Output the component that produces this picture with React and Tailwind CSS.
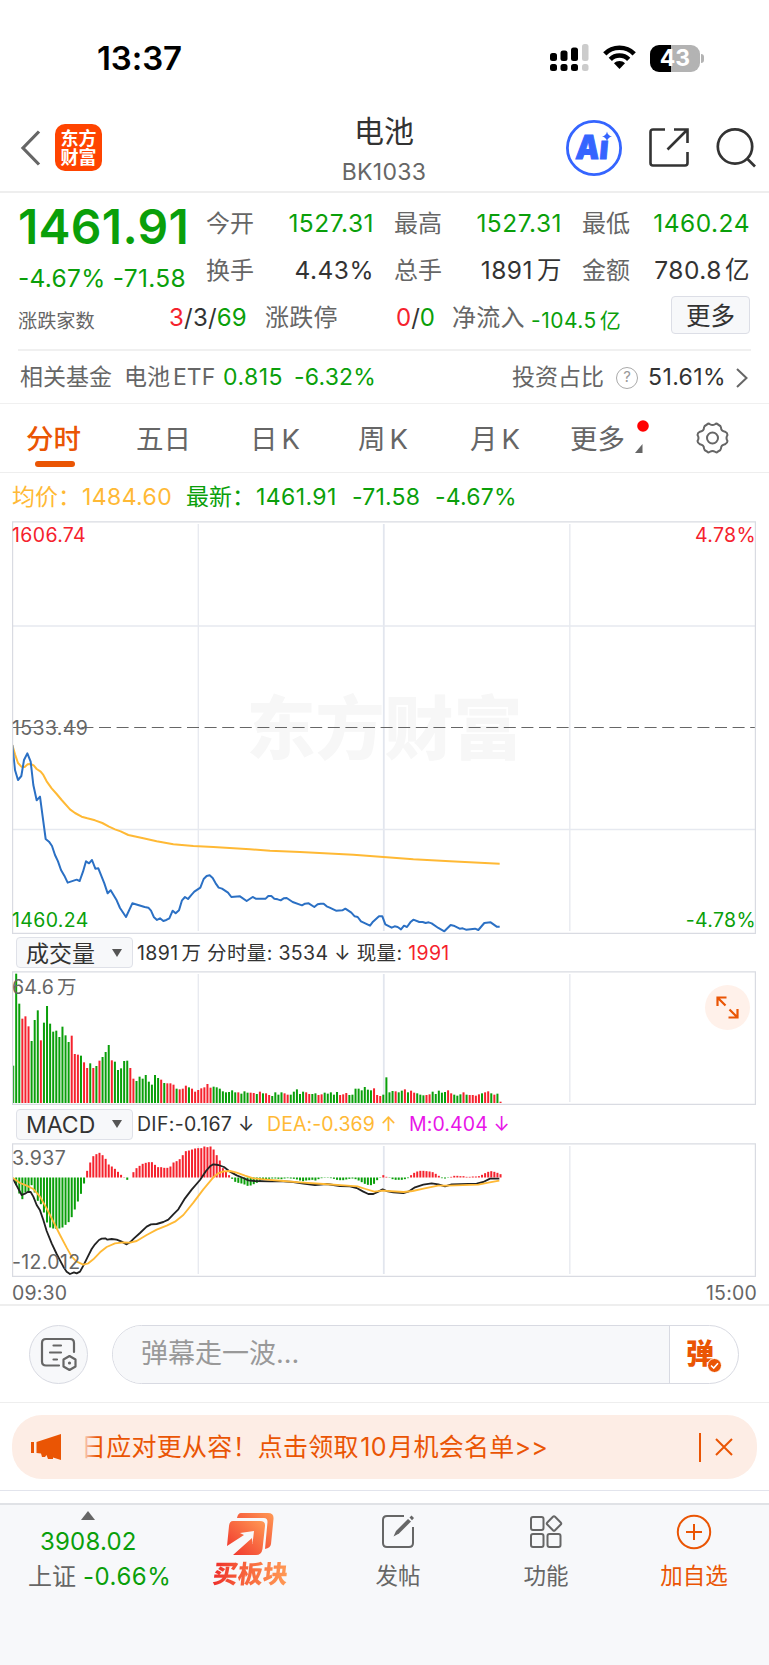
import React from 'react';

const GREEN = '#0a9f0a';
const RED = '#f5222d';

// points are stored at 3x, the groups below scale them down
const PRICE = '37,75 45,150 54,180 64,168 72,120 82,100 92,125 100,195 110,241 120,230 128,290 137,357 147,365 156,378 165,405 174,424 183,450 193,467 203,488 230,479 239,483 249,455 258,424 267,430 276,420 286,446 295,445 313,490 323,520 332,511 350,541 360,564 378,591 397,550 434,561 445,563 453,572 462,592 471,600 480,595 490,603 499,600 508,595 518,572 527,580 537,571 546,541 555,531 564,537 573,526 583,515 601,503 611,477 620,468 629,466 638,474 647,490 656,503 666,506 684,518 694,531 720,529 740,543 758,531 767,536 797,536 805,528 814,528 823,536 833,538 842,541 851,535 860,534 878,546 906,556 915,551 926,550 943,561 953,553 962,551 971,551 980,559 989,563 1008,572 1027,571 1036,566 1054,578 1064,589 1073,591 1083,604 1110,617 1119,605 1137,589 1147,589 1156,613 1175,623 1184,619 1193,621 1203,628 1212,617 1221,621 1231,607 1240,599 1258,606 1268,606 1277,609 1286,607 1295,610 1315,624 1333,634 1352,615 1361,617 1379,626 1388,625 1398,629 1425,626 1435,630 1453,609 1472,607 1490,620 1499,620';
const AVERAGE = '37,75 45,103 54,129 64,140 74,141 83,133 92,132 101,136 110,147 122,155 130,165 140,184 155,205 170,222 185,240 210,268 225,279 245,290 262,295 285,301 307,309 327,320 345,328 362,334 385,345 430,355 470,364 520,373 580,378 640,381 750,388 810,392 900,396 1060,404 1150,411 1240,418 1350,424 1499,431';
const DIF = '38,220 48,238 65,270 75,266 83,261 92,261 100,275 110,300 120,316 130,345 140,378 155,415 170,447 190,485 200,500 210,507 222,502 230,505 240,500 250,482 262,458 275,432 285,418 297,405 305,401 316,400 322,404 335,402 350,404 365,410 380,418 390,412 402,400 420,384 440,365 453,358 470,357 490,351 505,344 520,328 535,313 555,280 575,254 600,225 618,198 630,184 640,178 655,180 672,186 690,200 710,211 730,219 745,226 765,228 810,229 850,229 880,231 910,236 945,240 980,237 1020,243 1050,244 1070,249 1090,260 1105,267 1120,267 1135,260 1148,253 1160,258 1180,262 1210,264 1225,260 1245,247 1270,239 1295,235 1315,238 1335,244 1355,238 1430,236 1450,231 1470,221 1498,221';
const DEA = '38,218 60,234 80,242 100,252 120,275 140,310 160,350 180,390 200,428 215,455 230,470 250,479 265,475 280,463 300,442 320,426 345,415 370,412 390,413 410,408 440,390 470,374 500,362 525,350 550,330 580,293 610,253 640,217 655,205 670,199 690,198 710,203 735,212 760,220 800,224 850,228 900,232 970,237 1032,241 1072,244 1097,252 1123,260 1148,257 1211,261 1238,258 1274,250 1314,242 1344,242 1435,239 1465,233 1498,227';

// positive = red bar, negative = green bar
const VOLUME = [-112, -388, -298, 253, 260, 230, -186, -249, -278, 188, -241, -291, -238, -214, -217, -198, -229, -203, -183, 202, 147, 145, -142, 122, 105, -119, 105, -111, 127, -138, -153, -174, 128, -124, -99, -104, -126, -127, 105, 73, -66, -79, -73, -84, -64, -55, -84, -75, 70, -60, 59, 59, 55, -43, 41, 43, 52, -47, 43, 34, 39, 44, 47, 57, 46, -49, -47, -43, -35, -32, -33, -38, -32, 32, -28, -35, -31, 31, 30, -27, 34, -29, 29, 24, -21, -32, -25, -32, 29, 25, -25, -34, -41, -27, -34, 32, 27, -27, -29, 24, 26, -31, -28, -32, -25, -33, 24, 26, 30, -24, -25, -43, -43, -38, -48, -40, -38, 44, 24, 21, -25, -77, -32, -36, 35, -32, -37, 41, -32, 37, 31, -29, -25, -23, 24, 26, -34, -27, -37, -31, -33, 38, 29, -25, -22, -26, 32, -25, 24, 24, 22, 26, -29, 32, 35, -29, 25, -28, 4];
const MACD = [0, -23, -48, -65, -45, -41, -23, -45, -70, -80, -105, -135, -150, -153, -154, -153, -150, -142, -134, -119, -96, -72, -49, -18, 20, 45, 64, 70, 74, 67, 56, 39, 33, 26, 17, 8, 1, -7, 0, 16, 28, 35, 41, 44, 46, 46, 38, 31, 31, 29, 29, 33, 45, 49, 55, 67, 79, 81, 84, 87, 88, 88, 93, 91, 93, 84, 67, 51, 28, 18, 7, -4, -13, -16, -18, -21, -25, -24, -20, -16, -10, -5, -5, -4, -3, -3, -4, -5, -3, -2, -3, -4, -6, -9, -11, -9, -8, -7, -9, -5, -2, -1, -1, -2, -4, -7, -8, -8, -6, -4, -3, -5, -9, -14, -19, -22, -23, -19, -8, -1, 7, 2, -1, -5, -7, -7, -7, -5, -2, 7, 14, 18, 20, 20, 19, 18, 16, 11, 5, -2, -3, -1, 2, 5, 5, 4, 4, 2, 2, 3, 3, 4, 8, 13, 17, 19, 17, 14, 10];

const Bars = ({ data, base, signed }) => (
  <g>
    {data.map((v, i) => {
      const h = Math.abs(v) / 3;
      return (
        <rect
          key={i}
          x={i === 0 ? 1 : 0.1 + i * 3.085}
          y={signed && v < 0 ? base : base - h}
          width={i === 0 ? 1.2 : 2}
          height={h}
          fill={v > 0 ? RED : GREEN}
        />
      );
    })}
  </g>
);

const Frame = ({ h, children }) => (
  <svg width="745" height={h} className="block" fill="none">
    <path d={`M186.3 3V${h - 3}M557.8 3V${h - 3}`} stroke="#e8eaf0" strokeWidth="1.4" />
    <path d={`M371.8 3V${h - 3}`} stroke="#e2e6ee" strokeWidth="1.8" />
    {children}
    <path d={`M.6 ${h}V.8H743.4V${h}`} stroke="#d9dbe2" strokeWidth="1.2" />
    <path d={`M0 ${h - 0.7}H744`} stroke="#d9dbe2" strokeWidth="1.2" />
  </svg>
);

const Label = ({ children }) => (
  <div className="ml-1 flex h-[31px] w-[117px] shrink-0 items-center justify-between rounded-[4px] border border-[#dfe1e8] bg-[#f7f8fa] pr-[10px] pl-[9px] text-[23px] tracking-normal text-[#333]">
    <span className="pt-[3px]">{children}</span>
    <svg width="10" height="8"><path d="M0 0H10L5 8Z" fill="#555" /></svg>
  </div>
);

const StatusBar = () => (
  <div className="flex h-[100px] shrink-0 items-start justify-between pt-[38px] pr-[65px] pl-[97px]">
    <span className="pt-px text-[33px] leading-[39px] font-semibold tracking-[-0.100px] text-black">13:37</span>
    <div className="flex gap-[14px] pt-[6px]">
      <svg width="39" height="28" fill="#000">
        <rect x="0" y="9" width="7" height="8" rx="2.500" />
        <rect x="10.5" y="6.500" width="7" height="10.500" rx="2.500" />
        <rect x="21" y="3.500" width="7" height="13.500" rx="2.500" />
        <rect x="32" y="0" width="6.500" height="17" rx="2.500" fill="#ccc" />
        <rect x="0" y="20" width="7" height="7" rx="2.500" />
        <rect x="10.5" y="20" width="7" height="7" rx="2.500" />
        <rect x="21" y="20" width="7" height="7" rx="2.500" />
        <rect x="32" y="20" width="6.500" height="7" rx="2.500" fill="#ccc" />
      </svg>
      <svg width="33" height="27" viewBox="0 0 33 27" fill="none" stroke="#000" strokeWidth="4.600">
        <path d="M1.800 9.800C9.700 1.700 23.300 1.700 31.200 9.800" />
        <path d="M7.300 15.300C12.300 10.300 20.700 10.300 25.700 15.300" />
        <path d="M11 19.200C14 16.400 19 16.400 22 19.200L16.500 25Z" fill="#000" stroke="none" />
      </svg>
      <div className="flex items-center">
        <div className="flex h-[27px] w-[50px] items-center justify-center rounded-[9px] bg-linear-to-r from-black from-[43%] to-[#b3b3b3] to-[43%] text-[23px] leading-none font-bold text-white">43</div>
        <div className="ml-[1px] h-[9px] w-[3px] rounded-r-full bg-[#b3b3b3]" />
      </div>
    </div>
  </div>
);

const Header = () => (
  <div className="flex h-[93px] shrink-0 items-center border-b-2 border-[#eee] pt-[4px] pl-[20px]">
    <svg width="21" height="36" fill="none" stroke="#666" strokeWidth="3.200"><path d="M19 1.500L3 18L19 34.500" /></svg>
    <div className="ml-[14px] flex h-[47px] w-[47px] flex-col items-center justify-center rounded-[10px] bg-[#ff4400] text-[18px] leading-[19px] font-bold text-white">
      <span>东方</span>
      <span>财富</span>
    </div>
    <div className="ml-[162px] w-[240px] pt-[5px] text-center">
      <div className="text-[30px] leading-[38px] text-[#333]">电池</div>
      <div className="mt-[6px] text-[23px] leading-[32px] tracking-[0.300px] text-[#666]">BK1033</div>
    </div>
    <svg className="ml-[62px]" width="56" height="56" fill="none">
      <circle cx="28" cy="28" r="26.600" stroke="#3565ff" strokeWidth="2.800" />
      <text x="10" y="39" fontSize="33" fontWeight="900" fill="#3565ff" stroke="#3565ff" strokeWidth="1" transform="skewX(-5) translate(2.500 0)" textLength="32.500" lengthAdjust="spacingAndGlyphs">Aı</text>
      <path d="M41 11.500Q41.800 15.700 46 16.500Q41.800 17.300 41 21.500Q40.200 17.300 36 16.500Q40.200 15.700 41 11.500Z" fill="#3565ff" />
    </svg>
    <svg className="ml-[27px]" width="41" height="41" fill="none" stroke="#333" strokeWidth="2.600">
      <path d="M16 2.500H4Q1.500 2.500 1.500 5V36Q1.500 38.500 4 38.500H36Q38.500 38.500 38.500 36V25M25 2.500H38.500V16M38 3L18.500 22.500" />
    </svg>
    <svg className="ml-[26px]" width="42" height="42" fill="none" stroke="#333" strokeWidth="2.700">
      <circle cx="19" cy="19.500" r="17.200" />
      <path d="M31 31.500L39 39.500" />
    </svg>
  </div>
);

const Stats = () => (
  <div className="h-[211px] shrink-0 border-b border-[#f0f0f0] pt-[10px]">
    <div className="flex h-[94px]">
      <div className="w-[187px] pl-[18px] whitespace-nowrap text-[#0a9f0a]">
        <div className="text-[48px] leading-[48px] font-semibold tracking-[0.300px]">1461.91</div>
        <div className="mt-[11px] text-[24.500px] leading-[32px] tracking-[0.300px]">-4.67% -71.58</div>
      </div>
      <div className="ml-[19px] grid w-[544px] grid-cols-[168px_20px_168px_20px_168px] grid-rows-[47px_47px] text-[24px] leading-[41px] whitespace-nowrap text-[#333] [&_b]:text-[24.500px] [&_b]:font-normal [&_b]:tracking-[0.500px]">
        <div className="flex justify-between"><span className="text-[#666]">今开</span><b className="text-[#0a9f0a]">1527.31</b></div>
        <i />
        <div className="flex justify-between"><span className="text-[#666]">最高</span><b className="text-[#0a9f0a]">1527.31</b></div>
        <i />
        <div className="flex justify-between"><span className="text-[#666]">最低</span><b className="text-[#0a9f0a]">1460.24</b></div>
        <div className="flex justify-between"><span className="text-[#666]">换手</span><b>4.43%</b></div>
        <i />
        <div className="flex justify-between"><span className="text-[#666]">总手</span><b>1891<span className="ml-[4px]">万</span></b></div>
        <i />
        <div className="flex justify-between"><span className="text-[#666]">金额</span><b>780.8<span className="ml-[3px]">亿</span></b></div>
      </div>
    </div>
    <div className="mx-[18px] flex h-[54px] items-start border-b-2 border-[#f0f0f0] text-[24px] leading-[41px] whitespace-nowrap text-[#666]">
      <span className="w-[151px] pt-[4px] text-[19.200px]">涨跌家数</span>
      <span className="w-[96px] tracking-[0.200px] text-[#333]"><span className="text-[#f5222d]">3</span>/3/<span className="text-[#0a9f0a]">69</span></span>
      <span className="w-[131px] tracking-[0.200px]">涨跌停</span>
      <span className="w-[56px] text-[#333]"><span className="text-[#f5222d]">0</span>/<span className="text-[#0a9f0a]">0</span></span>
      <span className="w-[79px] tracking-[0.200px]">净流入</span>
      <span className="w-[140px] pt-[3px] text-[21px] tracking-[0.500px] text-[#0a9f0a]">-104.5<span className="ml-[3px]">亿</span></span>
      <button className="-mt-[1px] h-[38px] w-[79px] shrink-0 rounded-[4px] border border-[#dcdee6] bg-[#f7f8fa] text-[24.500px] leading-[38px] text-[#333]">更多</button>
    </div>
    <div className="flex h-[51px] items-center pt-[2px] pl-[20px] text-[23px] whitespace-nowrap text-[#666]">
      <span className="w-[104px]">相关基金</span>
      <span className="w-[99px]">电池<span className="ml-[3px]">ETF</span></span>
      <span className="w-[71px] tracking-[0.500px] text-[#0a9f0a]">0.815</span>
      <span className="w-[218px] tracking-[0.200px] text-[#0a9f0a]">-6.32%</span>
      <span className="w-[104px]">投资占比</span>
      <span className="flex h-[22px] w-[22px] items-center justify-center rounded-full border-[1.500px] border-[#aaa] text-[15px] text-[#999]">?</span>
      <span className="ml-[10px] w-[88px] tracking-[0.400px] text-[#333]">51.61%</span>
      <svg width="12" height="20" fill="none" stroke="#666" strokeWidth="2"><path d="M1 1L10.500 10L1 19" /></svg>
    </div>
  </div>
);

const Tabs = () => (
  <div className="flex h-[69px] shrink-0 border-b border-[#eee] text-[27.500px] leading-[70px] whitespace-nowrap text-[#666]">
    <div className="w-[110px] pl-[26px] font-medium text-[#ea5504]">
      <div className="h-[57px]">分时</div>
      <div className="ml-[9px] h-[6px] w-[40px] rounded-full bg-[#ea5504]" />
    </div>
    <div className="w-[140px] pl-[26px]">五日</div>
    <div className="w-[108px]">日<span className="ml-[4px]">K</span></div>
    <div className="w-[112px]">周<span className="ml-[4px]">K</span></div>
    <div className="w-[100px]">月<span className="ml-[4px]">K</span></div>
    <div className="w-[65px]">更多</div>
    <svg className="mt-[16px]" width="14" height="34">
      <circle cx="8" cy="6" r="5.800" fill="red" />
      <path d="M0 33H7.500V24Z" fill="#666" />
    </svg>
    <svg className="mt-[18px] ml-[47px]" width="33" height="32" viewBox="0 0 33 32" fill="none" stroke="#666" strokeWidth="2" strokeLinejoin="round">
      <path d="M11 2.500Q12.500 1 14 2.200Q16.500 4 19 2.200Q20.500 1 22 2.500Q25 4 25 5.500Q25 9 29 9.700Q31.500 11 31.500 13Q29.500 16 31.500 19Q31.500 21 29 22.300Q25 23 25 26.500Q25 28 22 29.500Q20.500 31 19 29.800Q16.500 28 14 29.800Q12.500 31 11 29.500Q8 28 8 26.500Q8 23 4 22.300Q1.500 21 1.500 19Q3.500 16 1.500 13Q1.500 11 4 9.700Q8 9 8 5.500Q8 4 11 2.500Z" />
      <circle cx="16.500" cy="16" r="5.500" />
    </svg>
  </div>
);

const PriceChart = () => (
  <div className="relative ml-[12px] h-[413px] w-[745px] shrink-0 text-[19.500px] leading-[24px] tracking-[0.350px] text-[#666]">
    <div className="absolute inset-x-0 top-[160px] text-center font-['Noto_Sans_CJK_SC'] text-[69px] leading-[86px] font-black tracking-normal text-[#f7f7f7]">东方财富</div>
    <div className="absolute inset-0">
      <Frame h={413}>
        <path d="M0 105H743M0 308.500H743" stroke="#e6e9f0" strokeWidth="1.500" />
        <path d="M0 206.500H743" stroke="#666" strokeWidth="1.200" strokeDasharray="12 5.600" strokeDashoffset="1" />
        <g transform="translate(-12 199) scale(.33333)" strokeWidth="6" strokeLinejoin="round">
          <polyline points={AVERAGE} stroke="#ffb935" />
          <polyline points={PRICE} stroke="#2b70c4" />
        </g>
      </Frame>
    </div>
    <span className="absolute top-[2px] left-0 text-[#f5222d]">1606.74</span>
    <span className="absolute top-[2px] right-px text-[#f5222d]">4.78%</span>
    <span className="absolute top-[195px] left-0">1533.49</span>
    <span className="absolute bottom-[2px] left-0 text-[#0a9f0a]">1460.24</span>
    <span className="absolute right-px bottom-[2px] text-[#0a9f0a]">-4.78%</span>
  </div>
);

const VolumeChart = () => (
  <div className="relative ml-[12px] h-[134px] w-[745px] shrink-0">
    <Frame h={134}><Bars data={VOLUME} base={132} /></Frame>
    <span className="absolute top-[4px] left-0 text-[19.500px] leading-[24px] tracking-[0.200px] text-[#666]">64.6<span className="ml-[3px]">万</span></span>
    <div className="absolute top-[14px] right-[7px] flex h-[45px] w-[45px] items-center justify-center rounded-full bg-[#fff1ea]">
      <svg width="23" height="23" fill="none" stroke="#ea5504" strokeWidth="2.200">
        <path d="M1.500 10V1.500H10.500M2 2L9.500 9.500M21.500 13V21.500H12.500M21 21L13.500 13.500" />
      </svg>
    </div>
  </div>
);

const MacdChart = () => (
  <div className="relative ml-[12px] h-[134px] w-[745px] shrink-0 text-[19.500px] leading-[24px] tracking-[0.350px] text-[#666]">
    <Frame h={134}>
      <Bars data={MACD} base={34.5} signed />
      <g transform="translate(-12 -38) scale(.33333)" strokeWidth="5.500" strokeLinejoin="round">
        <polyline points={DIF} stroke="#222" />
        <polyline points={DEA} stroke="#ffb935" />
      </g>
    </Frame>
    <span className="absolute top-[3px] left-0">3.937</span>
    <span className="absolute bottom-[3px] left-0">-12.012</span>
  </div>
);

const Danmu = () => (
  <div className="flex h-[99px] shrink-0 items-center border-t-2 border-b border-[#eee] pl-[29px]">
    <div className="flex h-[59px] w-[59px] items-center justify-center rounded-full border border-[#d8dae2] bg-[#f7f8fa]">
      <svg width="37" height="34" fill="none" stroke="#666" strokeWidth="2.200" strokeLinecap="round">
        <path d="M19 28.500H6Q2 28.500 2 24.500V6Q2 2 6 2H30Q34 2 34 6V15M13.500 8.500H21M10 15.500H21M13.500 22.500H17" />
        <path d="M29.500 19L35.500 22.500V29.500L29.500 33L23.500 29.500V22.500Z" strokeLinejoin="round" />
        <circle cx="29.500" cy="26" r="1.600" fill="#666" stroke="none" />
      </svg>
    </div>
    <div className="ml-[24px] flex h-[59px] w-[627px] overflow-hidden rounded-full border border-[#d8dae2]">
      <div className="w-[557px] border-r border-[#d8dae2] bg-[#f7f8fa] pl-[28px] text-[27px] leading-[55px] text-[#999]">弹幕走一波...</div>
      <div className="relative pl-[16px] text-[28px] leading-[56px] font-black text-[#ea5504]">
        弹
        <svg className="absolute top-[32px] left-[37px]" width="15" height="15" fill="none">
          <circle cx="7.500" cy="7.500" r="7" fill="#ea5504" stroke="#fff" />
          <path d="M4 7.500L6.700 10L11 5.200" stroke="#fff" strokeWidth="1.600" />
        </svg>
      </div>
    </div>
  </div>
);

const Banner = () => (
  <div className="h-[88px] shrink-0 border-b border-[#e2e4ec] px-[12px] pt-[12px]">
    <div className="flex h-[64px] items-center rounded-[30px] bg-[#fdede5] pl-[19px] text-[25px] whitespace-nowrap text-[#ea5504]">
      <svg width="31" height="28" fill="#ea5504">
        <path d="M0 9H3V20H0ZM5.500 9L30 1V27L22 24.500V26H17L15.500 22L14 24H11L10 20.500L5.500 20Z" />
      </svg>
      <div className="relative ml-[19px] w-[618px] pt-[2px] tracking-[0.250px]">
        <span>日应对更从容！点击领取<span className="mx-[1.500px]">10</span>月机会名单&gt;&gt;</span>
        <div className="absolute inset-y-0 left-0 w-[16px] bg-linear-to-r from-[#fdede5] to-transparent" />
      </div>
      <div className="h-[29px] w-[1.500px] bg-[#ea5504]" />
      <svg className="ml-[14px]" width="18" height="18" fill="none" stroke="#ea5504" strokeWidth="2"><path d="M1 1L17 17M17 1L1 17" /></svg>
    </div>
  </div>
);

const BottomBar = () => (
  <div className="mt-[12px] flex flex-1 border-t-2 border-[#e0e2e6] bg-[#f7f8fa] text-[22.500px] leading-[30px] whitespace-nowrap text-[#666]">
    <div className="w-[176px] pt-[6px]">
      <svg className="ml-[81px]" width="14" height="9"><path d="M7 0L14 9H0Z" fill="#666" /></svg>
      <div className="mt-[7px] pl-[40px] text-[24px] tracking-[0.200px] text-[#0a9f0a]">3908.02</div>
      <div className="mt-[5px] flex pl-[28px] text-[24px]">上证<span className="ml-[7px] tracking-[0.500px] text-[#0a9f0a]">-0.66%</span></div>
    </div>
    <div className="w-[149px] pt-[8px] text-center">
      <svg className="mx-auto" width="48" height="43" fill="none">
        <defs>
          <linearGradient id="buy" x1="0" y1="1" x2="1" y2="0">
            <stop offset="0" stopColor="#f0302a" />
            <stop offset="1" stopColor="#ff9a55" />
          </linearGradient>
        </defs>
        <path d="M14 0H41Q47 0 46.500 6L44 31Q43.500 35 38 36L40.500 9Q40.500 5 37 5H10Q11 0 14 0Z" fill="url(#buy)" />
        <path d="M6 8H33Q38.500 8 38 13L35.500 36Q34.500 42 29 42H6L25 25L25.500 31L27 18L13 20L17 22L0 33L2 13Q2.500 8 6 8Z" fill="url(#buy)" />
      </svg>
      <div className="-skew-x-6 bg-linear-to-r from-[#ee2c2a] from-25% to-[#ff9a55] to-75% bg-clip-text text-[25px] leading-[36px] font-black text-transparent">买板块</div>
    </div>
    <div className="w-[146px] pt-[9px] text-center">
      <svg className="mx-auto" width="34" height="36" fill="none" stroke="#666" strokeWidth="2">
        <path d="M23 2H6Q2 2 2 6V29Q2 33 6 33H28Q32 33 32 29V13" />
        <path d="M12.500 22.500L15 17L27 5L30 7.500L18 19.500Z" fill="#666" stroke="none" />
        <path d="M28.500 3.500L30.500 1.500L33 4L31 6.200Z" fill="#666" stroke="none" />
      </svg>
      <div className="mt-[11px]">发帖</div>
    </div>
    <div className="w-[150px] pt-[9px] text-center">
      <svg className="mx-auto" width="34" height="36" fill="none" stroke="#666" strokeWidth="2">
        <rect x="2" y="3" width="12.500" height="13" rx="2" />
        <rect x="2" y="20" width="12.500" height="13" rx="2" />
        <rect x="18.500" y="20" width="13" height="13" rx="2" />
        <rect x="19.500" y="4" width="11" height="11" rx="1.500" transform="rotate(45 25 9.500)" />
      </svg>
      <div className="mt-[11px]">功能</div>
    </div>
    <div className="w-[146px] pt-[9px] text-center text-[#ea5504]">
      <svg className="mx-auto" width="36" height="36" fill="none" stroke="#ea5504" strokeWidth="2">
        <circle cx="18" cy="18" r="16.200" />
        <path d="M10 18H26M18 10V26" />
      </svg>
      <div className="mt-[11px]">加自选</div>
    </div>
  </div>
);

const App = () => {
  return (
    <div className="flex h-[1665px] w-[769px] flex-col overflow-hidden bg-white font-['Inter','Noto_Sans_CJK_SC',sans-serif]">
      <StatusBar />
      <Header />
      <Stats />
      <Tabs />
      <div className="flex h-[48px] shrink-0 items-center pt-px pl-[12px] text-[23px] whitespace-nowrap text-[#0a9f0a]">
        <span className="w-[70px] text-[#ffb935]">均价：</span>
        <span className="w-[104px] tracking-[0.400px] text-[#ffb935]">1484.60</span>
        <span className="w-[70px]">最新：</span>
        <span className="w-[96px] tracking-[0.400px]">1461.91</span>
        <span className="w-[83px] tracking-[0.200px]">-71.58</span>
        <span className="tracking-[0.200px]">-4.67%</span>
      </div>
      <PriceChart />
      <div className="ml-[12px] flex h-[37px] shrink-0 items-center text-[19.500px] tracking-[0.350px] whitespace-nowrap text-[#333]">
        <Label>成交量</Label>
        <span className="ml-[4px] pt-[3px]">1891<span className="ml-[3px]">万</span> 分时量: 3534 ↓ 现量: <span className="text-[#f5222d]">1991</span></span>
      </div>
      <VolumeChart />
      <div className="ml-[12px] flex h-[38px] shrink-0 items-center text-[19.500px] tracking-[0.300px] whitespace-nowrap text-[#333]">
        <Label>MACD</Label>
        <span className="ml-[4px] w-[130px] pt-[2px]">DIF:-0.167 ↓</span>
        <span className="w-[142px] pt-[2px] tracking-[0.100px] text-[#ffb935]">DEA:-0.369 ↑</span>
        <span className="pt-[2px] tracking-[0.100px] text-[#e815e8]">M:0.404 ↓</span>
      </div>
      <MacdChart />
      <div className="flex h-[27px] shrink-0 justify-between px-[12px] pt-[4px] text-[19.500px] leading-[24px] tracking-[0.200px] text-[#666]">
        <span>09:30</span>
        <span>15:00</span>
      </div>
      <Danmu />
      <Banner />
      <BottomBar />
    </div>
  );
};

export default App;
